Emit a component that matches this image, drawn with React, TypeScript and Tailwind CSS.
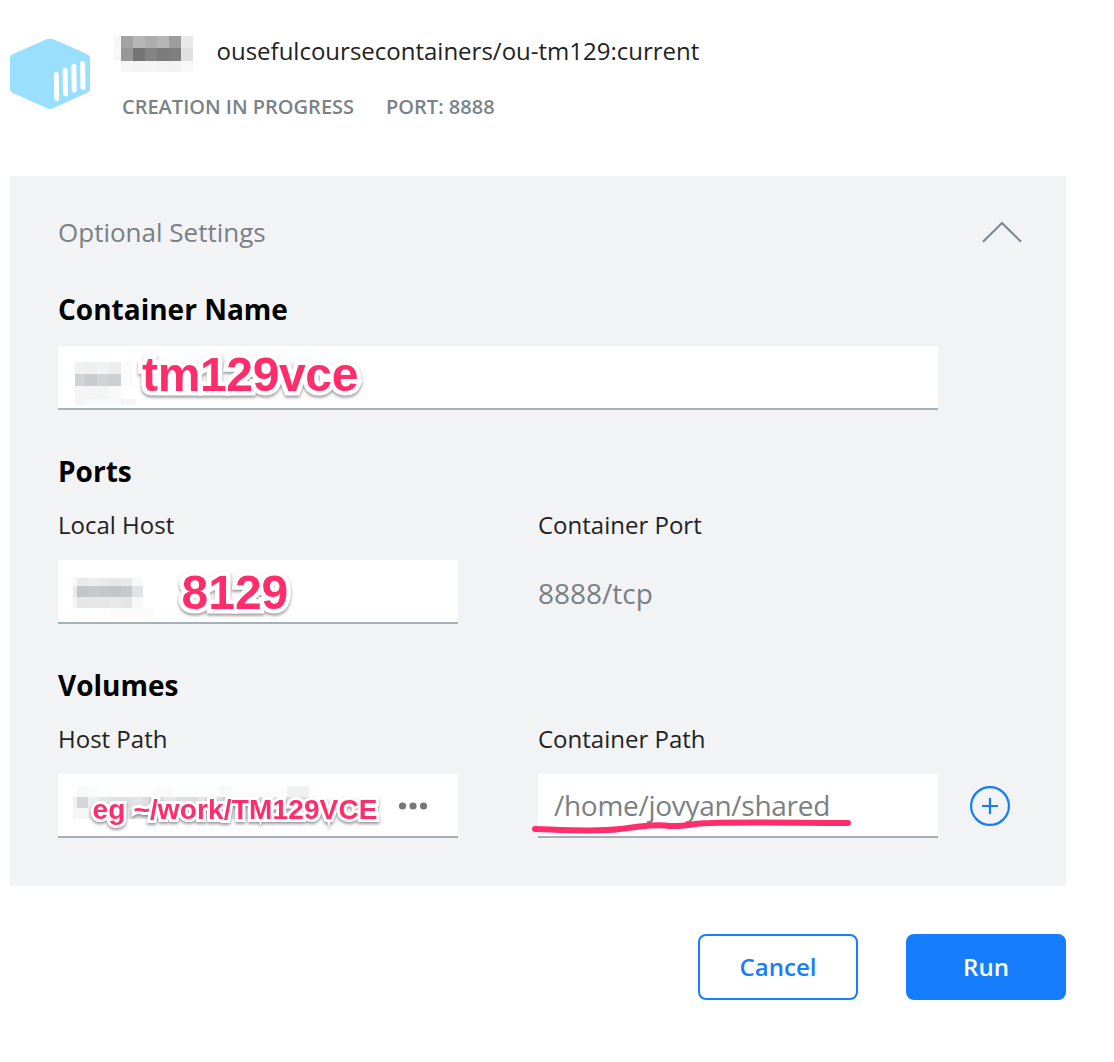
import type { ReactNode } from 'react';

type Row = { y: number; h: number; cells: [number, number, string][] };

// Redacted text, drawn as rows of [x, width, colour] blocks.
function Mosaic({ rows, width, height, className }: { rows: Row[]; width: number; height: number; className: string }) {
  return (
    <svg width={width} height={height} className={className} shapeRendering="crispEdges" aria-hidden="true">
      {rows.map((row) =>
        row.cells.map(([x, w, fill]) => <rect key={`${row.y}-${x}`} x={x} y={row.y} width={w} height={row.h} fill={fill} />),
      )}
    </svg>
  );
}

const titleRows: Row[] = [
  { y: 0, h: 12, cells: [[0, 7, '#f7f7f7'], [7, 12, '#a3a3a3'], [19, 12, '#b7b7b7'], [31, 12, '#adadad'], [43, 12, '#b7b7b7'], [55, 12, '#9d9d9d'], [67, 12, '#e9e9e9']] },
  { y: 12, h: 13, cells: [[0, 7, '#f8f8f8'], [7, 12, '#979797'], [19, 12, '#747474'], [31, 12, '#838383'], [43, 12, '#7b7b7b'], [55, 12, '#7e7e7e'], [67, 12, '#e0e0e0']] },
  { y: 25, h: 11, cells: [[7, 12, '#f5f5f5'], [19, 12, '#f3f3f3'], [31, 12, '#f5f5f5'], [43, 12, '#f3f3f3'], [55, 12, '#f2f2f2'], [67, 12, '#f8f8f8']] },
];

const nameRows: Row[] = [
  { y: 0, h: 12, cells: [[0, 10, '#f0f1f2'], [10, 12, '#eeefef'], [22, 12, '#f1f2f3'], [34, 12, '#ededee'], [46, 12, '#fbfbfb']] },
  { y: 12, h: 12, cells: [[0, 10, '#d1d4d6'], [10, 12, '#c9ccd0'], [22, 12, '#d1d3d5'], [34, 12, '#cdd0d3'], [46, 12, '#f9fafa']] },
  { y: 24, h: 13, cells: [[0, 22, '#f5f5f5'], [22, 12, '#f3f4f4'], [34, 12, '#f8f8f8']] },
  { y: 37, h: 6, cells: [[0, 10, '#f2f4f6'], [10, 36, '#f8f9fa'], [46, 15, '#f2f4f6']] },
];

const portRows: Row[] = [
  { y: 0, h: 8, cells: [[0, 4, '#f8f8f8'], [4, 11, '#e9eaea'], [15, 11, '#eceded'], [26, 11, '#e9eaea'], [37, 11, '#e6e7e8'], [48, 11, '#e9eaeb'], [59, 11, '#f9f9f9']] },
  { y: 8, h: 11, cells: [[0, 4, '#e8e9ea'], [4, 11, '#c1c5c8'], [15, 11, '#c7cacc'], [26, 11, '#c5c8ca'], [37, 11, '#c3c6c9'], [48, 11, '#c5c9cc'], [59, 11, '#e1e2e4']] },
  { y: 19, h: 11, cells: [[0, 4, '#f5f5f5'], [4, 11, '#e5e6e8'], [15, 22, '#e6e7e8'], [37, 11, '#e7e8e9'], [48, 11, '#e3e5e7'], [59, 11, '#f7f7f7']] },
  { y: 30, h: 9, cells: [[0, 37, '#fcfdfd'], [37, 44, '#fafbfb']] },
];

const pathRows: Row[] = [
  { y: 0, h: 11, cells: [[4, 11, '#f8f9f9'], [15, 11, '#fafbfb'], [26, 55, '#fdfdfd'], [81, 20, '#fafafa'], [101, 46, '#fbfcfc'], [147, 11, '#f6f7f7'], [158, 56, '#fcfcfc'], [214, 22, '#f0f1f1']] },
  { y: 11, h: 11, cells: [[0, 4, '#f0f0f1'], [4, 11, '#d4d6d8'], [15, 11, '#eeefef'], [26, 11, '#e5e6e8'], [37, 22, '#dfe1e3'], [59, 11, '#e4e5e6'], [70, 11, '#dcdee0'], [81, 22, '#e6e7e8'], [103, 22, '#dcdee0'], [125, 22, '#e6e7e8'], [147, 11, '#d7d9db'], [158, 22, '#e4e5e6'], [180, 34, '#dfe1e3'], [214, 22, '#dcdee0'], [236, 12, '#f1f1f2']] },
  { y: 22, h: 11, cells: [[0, 15, '#f5f6f6'], [15, 22, '#eeeff0'], [37, 44, '#e8e9ea'], [81, 55, '#eff0f1'], [136, 44, '#e5e6e8'], [180, 68, '#edeeef']] },
];

function Note({ className, children }: { className: string; children: ReactNode }) {
  return (
    <span
      className={`absolute whitespace-nowrap font-['Liberation_Sans',sans-serif] font-bold text-[#ff2d6c] [paint-order:stroke_fill] [stroke-linejoin:round] drop-shadow-[0_2px_1.5px_rgba(0,0,0,0.4)] ${className}`}
    >
      {children}
    </span>
  );
}

function Field({ className, children }: { className: string; children: ReactNode }) {
  return <div className={`relative h-16 border-b-2 border-[#a5b1ba] bg-white ${className}`}>{children}</div>;
}

function Heading({ className, children }: { className: string; children: ReactNode }) {
  return <h2 className={`h-10 text-[28px] leading-10 font-bold text-black ${className}`}>{children}</h2>;
}

export default function App() {
  return (
    <main className="h-[1062px] w-[1114px] overflow-hidden bg-white font-['Open_Sans',sans-serif] text-[#222]">
      <header className="flex h-44 pl-2.5">
        <svg width="80" height="72" viewBox="0 0 80 72" className="mt-[38px]" aria-hidden="true">
          <path
            d="M36.5 1.3Q40 0 43.5 1.3L77.5 16.2Q80 17.5 80 20V51Q80 53.4 77.5 54.7L43.5 70Q40 71.8 36.5 70L2.5 54.7Q0 53.4 0 51V20Q0 17.5 2.5 16.2Z"
            fill="#99dfff"
          />
          <path d="M46.3 36.5L46.7 60.5M55.1 32.2L55.5 56M63.8 28.2L64.2 52M72.6 25.4L73 49.5" stroke="#fff" strokeWidth="5" strokeLinecap="round" />
        </svg>
        <div className="ml-6 pt-[35px]">
          <div className="flex h-8 items-start">
            <Mosaic rows={titleRows} width={80} height={37} className="mt-px shrink-0" />
            <h1 className="ml-[22.5px] text-2xl leading-8">ousefulcoursecontainers/ou-tm129:current</h1>
          </div>
          <div className="mt-7 ml-2 flex gap-8 text-xl leading-6 font-semibold text-[#7a8288]">
            <span>CREATION IN PROGRESS</span>
            <span>PORT: 8888</span>
          </div>
        </div>
      </header>

      <section className="ml-2.5 h-[710px] w-[1056px] bg-[#f1f3f5] px-12 pt-9">
        <button className="flex h-10 w-[964px] items-center justify-between text-[26px] leading-10 text-[#7a8083]">
          <span>Optional Settings</span>
          <svg width="40" height="24" viewBox="0 0 40 24" fill="none" stroke="#7d8a97" strokeWidth="2.2" aria-hidden="true">
            <path d="M1 21.7L20 3L39 21.7" />
          </svg>
        </button>

        <Heading className="mt-[37px]">Container Name</Heading>
        <Field className="mt-[17px] w-[880px]">
          <Mosaic rows={nameRows} width={62} height={43} className="absolute top-4 left-[17px]" />
          <Note className="top-px left-[84px] text-[48px] leading-[56px] tracking-[-0.35px] [-webkit-text-stroke:9px_white]">tm129vce</Note>
        </Field>

        <Heading className="mt-[41px]">Ports</Heading>
        <div className="mt-[18px] grid grid-cols-[400px_400px] gap-x-20 text-2xl leading-8">
          <div>
            <div>Local Host</div>
            <Field className="mt-[19px]">
              <Mosaic rows={portRows} width={82} height={39} className="absolute top-[18px] left-[15px]" />
              <Note className="top-[5px] left-[123.5px] text-[48px] leading-[56px] [-webkit-text-stroke:9px_white]">8129</Note>
            </Field>
          </div>
          <div>
            <div>Container Port</div>
            <div className="mt-8 text-[28px] leading-10 text-[#7a8083]">8888/tcp</div>
          </div>
        </div>

        <Heading className="mt-[41px]">Volumes</Heading>
        <div className="mt-[18px] grid grid-cols-[400px_400px_40px] text-2xl leading-8">
          <div>
            <div>Host Path</div>
            <Field className="mt-[19px]">
              <Mosaic rows={pathRows} width={280} height={33} className="absolute top-[12px] left-[15px]" />
              <Note className="top-5 left-[34.5px] text-[28px] leading-8 tracking-[0.15px] [-webkit-text-stroke:6px_white]">eg ~/work/TM129VCE</Note>
              <svg width="30" height="8" className="absolute top-7 left-[340px]" fill="#777" aria-hidden="true">
                <circle cx="4.5" cy="4" r="3.6" />
                <circle cx="15" cy="4" r="3.6" />
                <circle cx="25.5" cy="4" r="3.6" />
              </svg>
            </Field>
          </div>
          <div className="ml-20 w-[400px]">
            <div>Container Path</div>
            <Field className="mt-[19px]">
              <div className="pl-4 text-[28px] leading-[62px] tracking-[-0.29px] text-[#7a8083]">/home/jovyan/shared</div>
              <svg width="326" height="20" className="absolute top-[42px] -left-2" fill="none" stroke="#ff2d6c" strokeWidth="6" strokeLinecap="round" aria-hidden="true">
                <path d="M5 13C35 14 68 16 90 13C113 10 127 8 140 10C160 11 158 7 180 7C225 6 270 7 318 7" />
              </svg>
            </Field>
          </div>
          <button className="mt-[51px] ml-28 h-10 w-10 translate-y-3" aria-label="Add volume">
            <svg width="40" height="40" fill="none" stroke="#147cfc" strokeWidth="2.2" aria-hidden="true">
              <circle cx="20" cy="20" r="18.9" />
              <path d="M12 20H28M20 12V28" />
            </svg>
          </button>
        </div>
      </section>

      <footer className="mt-12 flex w-[1066px] justify-end gap-12 text-2xl font-semibold">
        <button className="h-[66px] w-40 rounded-lg border-2 border-[#167efc] text-[#167efc]">Cancel</button>
        <button className="h-[66px] w-40 rounded-lg bg-[#167efc] text-white">Run</button>
      </footer>
    </main>
  );
}
